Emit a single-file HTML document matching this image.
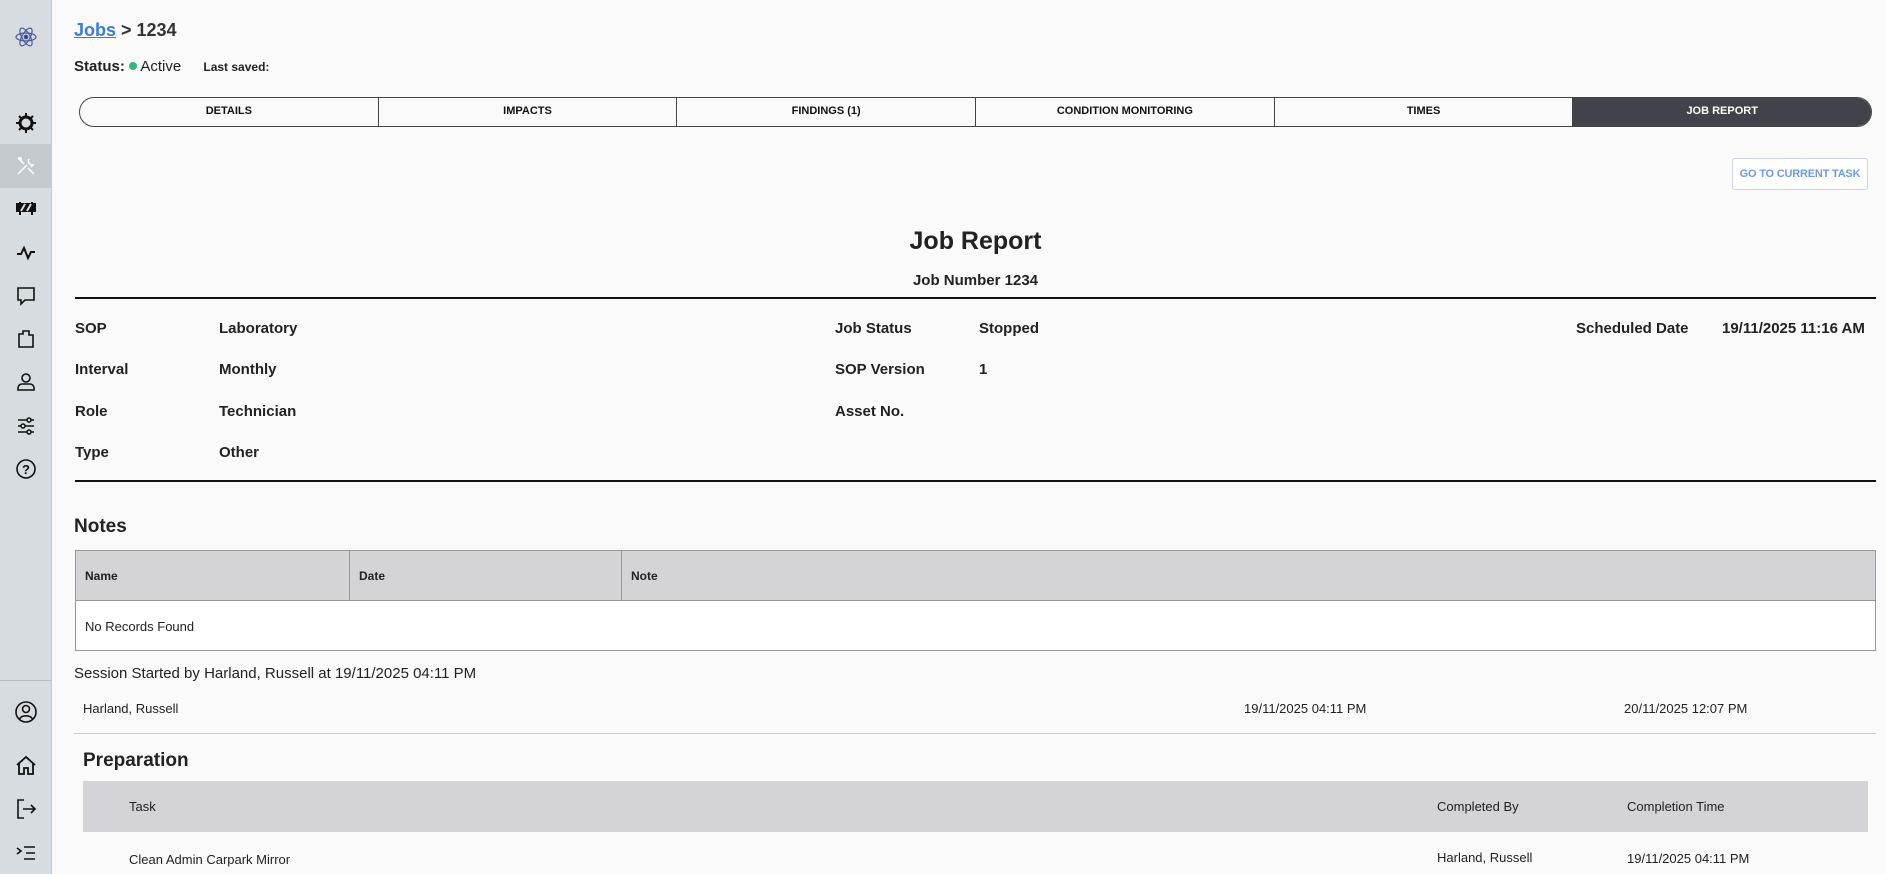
<!DOCTYPE html>
<html><head><meta charset="utf-8"><style>
*{box-sizing:border-box;margin:0;padding:0}
body{width:1886px;height:874px;overflow:hidden;background:#fafafa;font-family:"Liberation Sans",Arial,sans-serif;color:#222;position:relative}
.sb{position:absolute;left:0;top:0;width:52px;height:874px;background:#d6dcdf;border-right:1px solid #c5cbce}
.ic{position:absolute;left:14px;width:24px;height:24px}
.a{position:absolute;white-space:nowrap}
.b{font-weight:bold}
.tabs{position:absolute;left:79px;top:97px;width:1793px;height:30px;border:1.5px solid #444;border-radius:15px;display:flex;overflow:hidden;background:#fafafa}
.tabs div{flex:1 1 0;text-align:center;font-size:11px;font-weight:bold;line-height:27px;border-right:1.5px solid #444;color:#111}
.tabs div:last-child{border:none;background:#42424a;color:#fff}
.lbl{font-size:15px;font-weight:bold;color:#222}
</style></head><body>
<div class="sb">
<svg class="ic" style="top:25px" viewBox="0 0 24 24" fill="none" stroke="#4a5a9a" stroke-width="1.2"><ellipse cx="12" cy="12" rx="10" ry="4"/><ellipse cx="12" cy="12" rx="10" ry="4" transform="rotate(60 12 12)"/><ellipse cx="12" cy="12" rx="10" ry="4" transform="rotate(-60 12 12)"/><circle cx="12" cy="12" r="1.8" fill="#2a3a8a"/></svg>
<svg class="ic" style="top:111px" viewBox="0 0 24 24"><circle cx="12" cy="12" r="6" fill="none" stroke="#111" stroke-width="3"/><g stroke="#111" stroke-width="2"><path d="M12 2v4M12 18v4M2 12h4M18 12h4M5 5l3 3M16 16l3 3M5 19l3-3M16 8l3-3"/></g></svg>
<div style="position:absolute;left:0;top:144px;width:52px;height:44px;background:#c3c9cc"></div>
<svg class="ic" style="top:154px" viewBox="0 0 24 24" fill="none" stroke="#fff" stroke-width="1.5"><path d="M4 20l9-9M15 5a4 4 0 0 0 4 6l-2 2M4 4l6 6M4 4h3v3M14 14l6 6"/></svg>
<svg class="ic" style="top:197px" viewBox="0 0 24 24" fill="none" stroke="#111" stroke-width="2"><rect x="3" y="7" width="18" height="7" fill="#111"/><path d="M7 14l4-7M13 14l4-7" stroke="#d6dcdf"/><path d="M6 14v4M18 14v4M6 7V5M18 7V5"/></svg>
<svg class="ic" style="top:241px" viewBox="0 0 24 24" fill="none" stroke="#111" stroke-width="2"><path d="M3 13h4l3-6 4 10 3-6h4"/></svg>
<svg class="ic" style="top:284px" viewBox="0 0 24 24" fill="none" stroke="#111" stroke-width="1.6"><path d="M4 4h16v12H11l-4 4v-4H4z"/></svg>
<svg class="ic" style="top:327px" viewBox="0 0 24 24" fill="none" stroke="#111" stroke-width="1.6"><path d="M5 7h4V4h6v4h4v12H5z"/></svg>
<svg class="ic" style="top:370px" viewBox="0 0 24 24" fill="none" stroke="#111" stroke-width="1.6"><circle cx="12" cy="8" r="4"/><path d="M4 20v-2a4 4 0 0 1 4-4h8a4 4 0 0 1 4 4v2z"/></svg>
<svg class="ic" style="top:414px" viewBox="0 0 24 24" fill="none" stroke="#111" stroke-width="1.5"><path d="M4 6h16M4 12h16M4 18h16"/><circle cx="15" cy="6" r="2" fill="#d6dcdf"/><circle cx="9" cy="12" r="2" fill="#d6dcdf"/><circle cx="15" cy="18" r="2" fill="#d6dcdf"/></svg>
<svg class="ic" style="top:457px" viewBox="0 0 24 24" fill="none" stroke="#111" stroke-width="1.6"><circle cx="12" cy="12" r="9"/><text x="12" y="17" font-size="13" text-anchor="middle" fill="#111" stroke="none" font-family="Liberation Sans" font-weight="bold">?</text></svg>
<div style="position:absolute;left:0;top:680px;width:52px;border-top:1px solid #b5bbbe"></div>
<svg class="ic" style="top:700px" viewBox="0 0 24 24" fill="none" stroke="#111" stroke-width="1.6"><circle cx="12" cy="12" r="10"/><circle cx="12" cy="9" r="3.5"/><path d="M5.5 19a7 5 0 0 1 13 0"/></svg>
<svg class="ic" style="top:754px" viewBox="0 0 24 24" fill="none" stroke="#111" stroke-width="1.8"><path d="M3 11l9-8 9 8M5 9v11h5v-6h4v6h5V9"/></svg>
<svg class="ic" style="top:797px" viewBox="0 0 24 24" fill="none" stroke="#111" stroke-width="1.6"><path d="M10 3H4v18h6M9 12h12M17 8l4 4-4 4"/></svg>
<svg class="ic" style="top:841px" viewBox="0 0 24 24" fill="none" stroke="#111" stroke-width="1.6"><path d="M3 7l4 3-4 3M10 6h11M12 12h9M10 18h11"/></svg>
</div>

<div class="a b" style="left:74px;top:20px;font-size:18px;color:#333"><span style="color:#3b7be0;text-decoration:underline">Jobs</span> &gt; 1234</div>
<div class="a" style="left:74px;top:58px;font-size:15px"><b>Status:</b> <span style="display:inline-block;width:8px;height:8px;border-radius:50%;background:#2dbb7a;vertical-align:1px"></span> Active <span style="font-size:12px;font-weight:bold;margin-left:18px">Last saved:</span></div>

<div class="tabs"><div>DETAILS</div><div>IMPACTS</div><div>FINDINGS (1)</div><div>CONDITION MONITORING</div><div>TIMES</div><div>JOB REPORT</div></div>

<div class="a b" style="left:1732px;top:158px;width:136px;height:32px;border:1px solid #d0d4dc;border-radius:3px;background:#fff;color:#6f9ae8;font-size:11px;text-align:center;line-height:30px;letter-spacing:-0.2px">GO TO CURRENT TASK</div>

<div class="a b" style="left:75px;width:1801px;text-align:center;top:227px;font-size:25px">Job Report</div>
<div class="a b" style="left:75px;width:1801px;text-align:center;top:272px;font-size:15px">Job Number 1234</div>
<div class="a" style="left:75px;top:297px;width:1801px;border-top:2px solid #111"></div>

<div class="a lbl" style="left:75px;top:320px">SOP</div><div class="a lbl" style="left:219px;top:320px">Laboratory</div>
<div class="a lbl" style="left:75px;top:361px">Interval</div><div class="a lbl" style="left:219px;top:361px">Monthly</div>
<div class="a lbl" style="left:75px;top:403px">Role</div><div class="a lbl" style="left:219px;top:403px">Technician</div>
<div class="a lbl" style="left:75px;top:444px">Type</div><div class="a lbl" style="left:219px;top:444px">Other</div>
<div class="a lbl" style="left:835px;top:320px">Job Status</div><div class="a lbl" style="left:979px;top:320px">Stopped</div>
<div class="a lbl" style="left:835px;top:361px">SOP Version</div><div class="a lbl" style="left:979px;top:361px">1</div>
<div class="a lbl" style="left:835px;top:403px">Asset No.</div>
<div class="a lbl" style="left:1576px;top:320px">Scheduled Date</div><div class="a lbl" style="left:1722px;top:320px">19/11/2025 11:16 AM</div>
<div class="a" style="left:75px;top:480px;width:1801px;border-top:2px solid #111"></div>

<div class="a b" style="left:74px;top:516px;font-size:19px">Notes</div>
<div class="a" style="left:75px;top:550px;width:1801px;height:101px;border:1px solid #999;background:#fff">
<div style="height:50px;background:#d3d3d8;border-bottom:1px solid #999;position:relative;font-size:12px;font-weight:bold">
<span class="a" style="left:9px;top:18px">Name</span><span class="a" style="left:273px;top:0;height:50px;border-left:1px solid #999"></span><span class="a" style="left:273px;top:18px;padding-left:10px">Date</span><span class="a" style="left:545px;top:0;height:50px;border-left:1px solid #999"></span><span class="a" style="left:545px;top:18px;padding-left:10px">Note</span></div>
<div class="a" style="left:9px;top:68px;font-size:13px">No Records Found</div></div>

<div class="a" style="left:74px;top:665px;font-size:15px">Session Started by Harland, Russell at 19/11/2025 04:11 PM</div>
<div class="a" style="left:83px;top:701px;font-size:13px">Harland, Russell</div>
<div class="a" style="left:1244px;top:701px;font-size:13px">19/11/2025 04:11 PM</div>
<div class="a" style="left:1624px;top:701px;font-size:13px">20/11/2025 12:07 PM</div>
<div class="a" style="left:74px;top:733px;width:1802px;border-top:1px solid #ccc"></div>
<div class="a b" style="left:83px;top:750px;font-size:19px">Preparation</div>
<div class="a" style="left:83px;top:781px;width:1785px;height:51px;background:#d3d3d8;font-size:13px">
<span class="a" style="left:46px;top:18px">Task</span><span class="a" style="left:1354px;top:18px">Completed By</span><span class="a" style="left:1544px;top:18px">Completion Time</span></div>
<div class="a" style="left:129px;top:852px;font-size:13px">Clean Admin Carpark Mirror</div>
<div class="a" style="left:1437px;top:850px;font-size:13px">Harland, Russell</div>
<div class="a" style="left:1627px;top:851px;font-size:13px">19/11/2025 04:11 PM</div>
</body></html>
